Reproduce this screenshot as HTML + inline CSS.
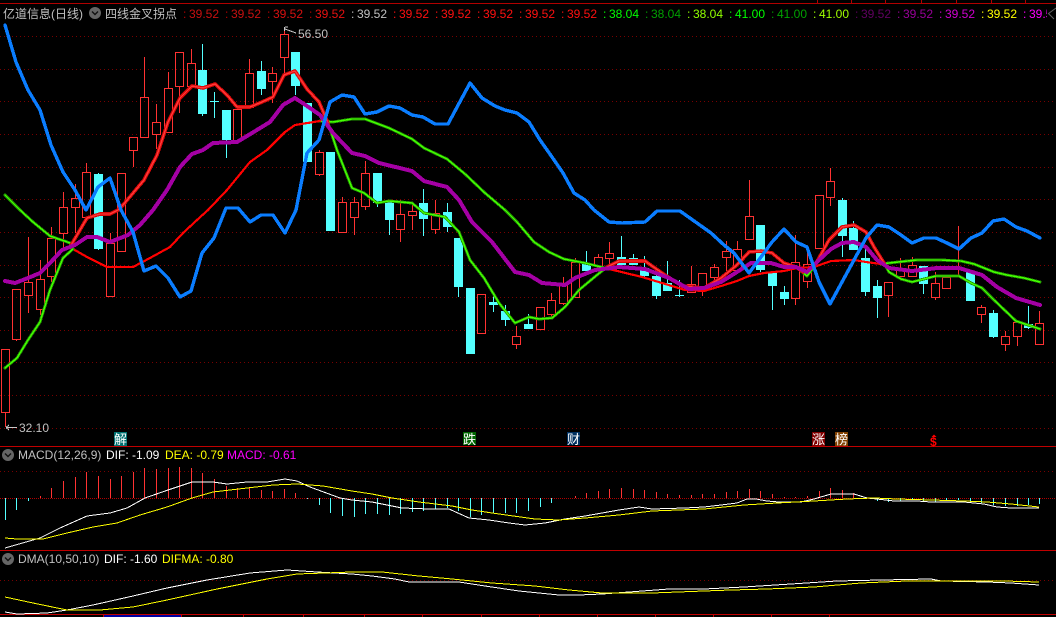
<!DOCTYPE html>
<html><head><meta charset="utf-8"><style>
html,body{margin:0;padding:0;background:#000;width:1056px;height:617px;overflow:hidden}
svg{display:block;position:absolute;left:0;top:0}
text{font-family:"Liberation Sans","Noto Sans CJK SC",sans-serif;font-size:12px}
</style></head><body>
<svg width="1056" height="617" viewBox="0 0 1056 617" xmlns="http://www.w3.org/2000/svg">
<rect width="1056" height="617" fill="#000"/>
<defs>
<clipPath id="hc"><rect x="0" y="0" width="1047" height="30"/></clipPath>
<path id="g1" d="M5 368L17 358L28 340L40 322L50 290L63 258L73 249"/>
<path id="r1" d="M70 247L87 218L100 214L110 214L118 210L123 205L144 180L157 155L168 122L180 98L192 86L203 88L215 84L227 95L237 107L250 107L262 102L273 97L284 75L295 71L307 89L319 102L328 123"/>
<path id="g2" d="M328 123L337 150L352 188L364 193L377 203L389 201L412 203L424 213L445 217L459 232L470 260L484 278L499 303L515 323L529 317L539 319L552 318L565 307L579 290L597 275L607 267"/>
<path id="r2" d="M607 267L619 261L645 261L662 273L682 286L704 288L721 278L737 265L749 252L761 251L772 253L784 263L796 267L803 272"/>
<path id="g3" d="M796 267L807 276L814 267L820 258"/>
<path id="r3" d="M814 267L829 240L842 227L854 225L866 232L874 247L884 263"/>
<path id="g4" d="M884 263L889 272L901 279L912 282L924 279L936 276L959 276L971 283L982 288L994 300L1016 321L1040 329"/>
<path id="g5" d="M5 195L20 210L33 222L50 236L73 244"/>
<path id="g6" d="M320 121L333 122L352 119L365 119L389 128L412 139L424 148L447 159L465 174L485 193L505 210L517 222L534 242L549 252L564 259L585 263L609 269"/>
<path id="g7" d="M881 264L889 263L917 260L941 260L961 261L974 264L994 272L1007 275L1024 278L1040 282"/>
</defs>
<!-- top border and ticks -->
<g shape-rendering="crispEdges">
<rect x="0" y="3" width="1056" height="1" fill="#b00000"/>
<path d="M817.5 0V3M851.5 0V3M885.5 0V3M921.5 0V3M956.5 0V3M991.5 0V3M1025.5 0V3" stroke="#b00000" fill="none"/>
<!-- grid -->
<g stroke="#780000" stroke-dasharray="1 3" fill="none">
<path d="M0 36.5H1056M0 69.5H1056M0 101.5H1056M0 134.5H1056M0 167.5H1056M0 199.5H1056M0 232.5H1056M0 265.5H1056M0 297.5H1056M0 330.5H1056M0 362.5H1056M0 395.5H1056M0 428.5H1056M0 471.5H1056M0 580.5H1056"/>
</g>
<path d="M0 498.5H1056" stroke="#b00000" stroke-dasharray="1 1" fill="none"/>
<!-- panel lines -->
<rect x="0" y="446" width="1056" height="1" fill="#c00000"/>
<rect x="0" y="550" width="1056" height="1" fill="#c00000"/>
<rect x="0" y="614" width="1056" height="1" fill="#c00000"/>
<rect x="103" y="615" width="78" height="2" fill="#0000a0"/>
<path d="M103.5 615V617M181.5 615V617M243.5 615V617M303.5 615V617M364.5 615V617M422.5 615V617M481.5 615V617M539.5 615V617M597.5 615V617M655.5 615V617M713.5 615V617M771.5 615V617M829.5 615V617" stroke="#c00000" fill="none"/>
<!-- red wicks -->
<path fill="none" stroke="#ff3232" d="M5.5 412V427M16.5 339V341M28.5 237V282M28.5 295V313M40.5 260V279M40.5 309V315M51.5 227V238M51.5 276V282M63.5 192V207M63.5 233V248M75.5 184V198M75.5 207V233M86.5 163V172M110.5 233V243M133.5 150V167M144.5 57V97M156.5 104V122M156.5 134V149M168.5 72V88M179.5 86V113M191.5 49V63M249.5 59V73M272.5 67V73M272.5 81V103M284.5 28V34M284.5 57V73M319.5 150V152M319.5 174V176M342.5 197V202M354.5 197V202M354.5 217V235M365.5 161V173M365.5 206V210M400.5 200V214M400.5 229V242M412.5 205V211M412.5 215V230M435.5 200V213M435.5 229V234M516.5 326V336M516.5 344V349M551.5 293V300M551.5 314V317M563.5 277V285M563.5 303V305M575.5 258V262M598.5 254V257M609.5 242V253M609.5 258V265M691.5 266V284M702.5 290V296M714.5 264V267M714.5 277V280M726.5 241V251M726.5 257V271M737.5 241V249M749.5 180V216M795.5 235V262M795.5 298V305M807.5 253V264M807.5 281V288M830.5 168V181M830.5 197V206M888.5 295V317M900.5 258V268M912.5 257V265M935.5 272V283M935.5 297V300M958.5 226V277M981.5 305V307M981.5 314V323M1005.5 331V336M1005.5 344V351M1017.5 336V346M1039.5 311V323"/>
<!-- red bodies -->
<path fill="none" stroke="#ff3232" d="M1.5 349.5h8V412.5h-8zM12.5 289.5h8V339.5h-8zM24.5 282.5h8V295.5h-8zM36.5 279.5h8V309.5h-8zM47.5 238.5h8V276.5h-8zM59.5 207.5h8V233.5h-8zM71.5 198.5h8V207.5h-8zM82.5 172.5h8V217.5h-8zM106.5 243.5h8V296.5h-8zM117.5 173.5h8V251.5h-8zM129.5 137.5h8V150.5h-8zM140.5 97.5h8V137.5h-8zM152.5 122.5h8V134.5h-8zM164.5 88.5h8V132.5h-8zM175.5 52.5h8V86.5h-8zM187.5 63.5h8V86.5h-8zM233.5 109.5h8V140.5h-8zM245.5 73.5h8V107.5h-8zM268.5 73.5h8V81.5h-8zM280.5 34.5h8V57.5h-8zM315.5 152.5h8V174.5h-8zM338.5 202.5h8V232.5h-8zM350.5 202.5h8V217.5h-8zM361.5 173.5h8V206.5h-8zM396.5 214.5h8V229.5h-8zM408.5 211.5h8V215.5h-8zM431.5 213.5h8V229.5h-8zM477.5 294.5h8V333.5h-8zM512.5 336.5h8V344.5h-8zM536.5 307.5h8V329.5h-8zM547.5 300.5h8V314.5h-8zM559.5 285.5h8V303.5h-8zM571.5 262.5h8V297.5h-8zM594.5 257.5h8V266.5h-8zM605.5 253.5h8V258.5h-8zM687.5 284.5h8V292.5h-8zM698.5 273.5h8V290.5h-8zM710.5 267.5h8V277.5h-8zM722.5 251.5h8V257.5h-8zM733.5 249.5h8V270.5h-8zM745.5 216.5h8V239.5h-8zM791.5 262.5h8V298.5h-8zM803.5 264.5h8V281.5h-8zM815.5 195.5h8V248.5h-8zM826.5 181.5h8V197.5h-8zM884.5 282.5h8V295.5h-8zM896.5 268.5h8V276.5h-8zM908.5 265.5h8V276.5h-8zM931.5 283.5h8V297.5h-8zM942.5 277.5h8V288.5h-8zM977.5 307.5h8V314.5h-8zM1001.5 336.5h8V344.5h-8zM1013.5 322.5h8V336.5h-8zM1035.5 323.5h8V344.5h-8z"/>
<!-- cyan wicks -->
<path fill="none" stroke="#54ffff" d="M98.5 173V250M202.5 44V116M214.5 92V118M226.5 140V158M261.5 61V95M295.5 86V95M377.5 203V207M389.5 220V235M423.5 189V236M447.5 203V232M458.5 287V297M493.5 293V312M505.5 305V326M528.5 314V324M586.5 251V264M621.5 236V257M633.5 254V258M644.5 256V278M656.5 271V299M667.5 261V283M679.5 280V297M760.5 270V272M772.5 286V310M784.5 286V305M842.5 198V257M853.5 221V228M865.5 249V296M877.5 280V318M923.5 284V294M993.5 310V338M1028.5 306V329M210 101.5H219M675 295.5H684"/>
<!-- cyan bodies -->
<path fill="#54ffff" d="M94 174h9V249h-9zM198 70h9V114h-9zM222 110h9V140h-9zM257 71h9V89h-9zM291 52h9V86h-9zM303 103h9V162h-9zM326 152h9V231h-9zM373 173h9V203h-9zM385 202h9V220h-9zM419 203h9V219h-9zM443 212h9V227h-9zM454 238h9V287h-9zM466 288h9V354h-9zM489 302h9V305h-9zM501 311h9V320h-9zM524 324h9V329h-9zM582 264h9V271h-9zM617 257h9V265h-9zM629 258h9V265h-9zM640 268h9V276h-9zM652 276h9V296h-9zM663 283h9V291h-9zM756 225h9V270h-9zM768 273h9V286h-9zM780 292h9V299h-9zM838 200h9V236h-9zM849 228h9V250h-9zM861 258h9V292h-9zM873 286h9V298h-9zM919 266h9V284h-9zM966 271h9V301h-9zM989 313h9V337h-9zM1024 324h9V328h-9z"/>
</g>
<!-- main lines -->
<g fill="none" shape-rendering="crispEdges" stroke-linejoin="round" stroke-linecap="round">
<!-- slow line -->
<g stroke="#1f8f00" stroke-width="3"><use href="#g5"/><use href="#g6"/><use href="#g7"/></g>
<g stroke="#44ff00" stroke-width="1.4"><use href="#g5"/><use href="#g6"/><use href="#g7"/></g>
<path stroke="#ff0000" stroke-width="2.2" d="M73 249L87 257L107 267L133 267L150 258L170 247L183 233L197 220L208 210L227 190L250 162L267 150L285 132L295 125L320 121M609 269L642 277L662 283L685 290L704 291L721 286L737 281L749 276L764 273L784 271L797 268L814 267L831 261L854 260L866 262L881 264"/>
<!-- fast line -->
<g stroke="#1f8f00" stroke-width="3"><use href="#g1"/><use href="#g2"/><use href="#g3"/><use href="#g4"/></g>
<g stroke="#44ff00" stroke-width="1.4"><use href="#g1"/><use href="#g2"/><use href="#g3"/><use href="#g4"/></g>
<g stroke="#d80808" stroke-width="3.6"><use href="#r1"/><use href="#r2"/><use href="#r3"/></g>
<g stroke="#ff3838" stroke-width="1.4"><use href="#r1"/><use href="#r2"/><use href="#r3"/></g>
<!-- purple -->
<path stroke="#a400a4" stroke-width="4" d="M5 281L15 283L28 278L40 273L50 263L62 250L75 245L87 237L97 237L110 242L128 235L140 225L153 210L167 190L180 167L192 154L203 150L213 143L237 142L252 133L270 122L283 105L295 98L307 106L320 115L333 133L352 153L365 156L379 163L412 171L424 181L447 187L459 200L472 222L492 242L515 272L529 275L542 283L565 285L575 278L595 270L619 267L645 269L669 278L689 289L704 288L721 282L737 272L751 263L771 263L784 267L796 267L807 272L819 260L831 249L842 243L854 242L866 247L877 260L889 268L912 271L937 268L959 268L982 275L997 287L1016 298L1040 305"/>
<!-- blue -->
<path stroke="#0a7dff" stroke-width="3.4" d="M5 25L16 62L28 90L40 110L51 145L63 172L75 190L86 210L98 187L110 178L121 210L133 232L144 271L156 266L168 278L180 297L191 291L202 253L214 238L226 208L238 208L250 222L261 215L273 215L285 233L296 210L307 153L319 140L330 102L342 95L354 97L365 114L377 112L389 106L400 108L412 115L423 117L435 124L448 124L470 83L482 98L495 106L505 110L517 113L529 122L540 140L552 157L563 173L574 193L585 200L594 210L609 222L622 223L645 222L657 211L680 211L704 228L711 233L724 245L734 253L749 273L761 257L772 242L784 229L796 242L807 247L819 282L830 304L842 282L854 260L866 238L877 225L889 227L901 235L912 243L924 238L936 238L947 243L959 249L971 238L982 233L993 221L1004 219L1016 227L1027 231L1040 238"/>
</g>
<!-- histogram -->
<g shape-rendering="crispEdges" fill="none">
<path stroke="#54ffff" d="M5.5 498V520M16.5 498V510M28.5 498V501M307.5 498V499M319.5 498V505M330.5 498V513M342.5 498V516M354.5 498V517M365.5 498V514M377.5 498V514M389.5 498V515M400.5 498V514M412.5 498V512M423.5 498V511M435.5 498V509M447.5 498V508M458.5 498V511M470.5 498V517M481.5 498V515M493.5 498V513M505.5 498V513M516.5 498V513M528.5 498V511M540.5 498V507M551.5 498V503M877.5 498V501M888.5 498V502M900.5 498V501M912.5 498V500M923.5 498V501M935.5 498V502M946.5 498V501M958.5 498V500M970.5 498V502M981.5 498V503M993.5 498V505M1005.5 498V506M1017.5 498V506M1028.5 498V505M1039.5 498V504"/>
<path stroke="#ff3232" d="M40.5 496V498M51.5 488V498M63.5 481V498M75.5 477V498M86.5 472V498M98.5 476V498M110.5 479V498M121.5 476V498M133.5 472V498M144.5 468V498M156.5 469V498M168.5 468V498M179.5 467V498M191.5 468V498M202.5 473V498M214.5 479V498M226.5 486V498M237.5 488V498M249.5 488V498M261.5 490V498M272.5 491V498M284.5 489V498M295.5 493V498M575.5 496V498M586.5 493V498M598.5 491V498M609.5 489V498M621.5 488V498M633.5 489V498M644.5 490V498M656.5 492V498M667.5 494V498M679.5 495V498M691.5 495V498M702.5 494V498M714.5 494V498M726.5 492V498M737.5 491V498M749.5 489V498M760.5 491V498M772.5 494V498M784.5 497V498M795.5 497V498M807.5 496V498M819.5 491V498M830.5 488V498M842.5 490V498M853.5 493V498"/>
<path stroke="#ffffff" stroke-width="1" d="M5 548L40 538L60 528L87 516L110 513L127 508L145 498L168 490L192 482L213 482L227 484L247 482L267 482L285 479L297 481L310 487L340 498L352 500L372 502L392 506L402 508L429 509L449 509L469 518L489 520L509 523L525 525L545 523L565 519L585 516L619 510L639 507L652 509L685 508L704 507L721 505L737 503L747 499L756 499L767 501L779 502L801 502L814 499L831 494L854 494L867 498L877 499L894 501L917 501L931 502L964 502L984 504L997 507L1011 508L1039 508"/>
<path stroke="#ffff00" stroke-width="1" d="M5 538L17 539L43 539L67 533L93 527L117 523L140 515L167 507L192 498L213 492L247 488L273 485L297 484L323 486L352 491L372 494L392 498L419 502L452 506L472 510L499 514L535 519L559 520L585 518L619 515L652 511L704 509L744 505L777 503L814 501L847 499L874 498L897 499L931 500L964 501L987 502L1011 504L1039 507"/>
<path stroke="#ffffff" stroke-width="1" d="M5 612L17 614L47 613L67 610L93 605L133 596L167 588L207 580L250 573L287 570L317 572L352 574L372 576L395 579L409 582L459 582L485 586L519 591L559 595L579 595L602 594L629 592L669 589L704 589L744 587L791 584L837 581L881 580L931 579L941 581L987 582L1011 583L1039 585"/>
<path stroke="#ffff00" stroke-width="1" d="M5 597L33 603L67 610L100 610L133 607L167 600L217 589L267 579L297 574L352 572L382 572L419 576L452 579L492 583L535 586L569 590L602 593L652 593L704 591L731 590L767 589L814 587L861 583L907 581L1004 581L1039 582"/>
</g>
<!-- high / low labels -->
<g fill="none" stroke="#c8c8c8">
<path shape-rendering="crispEdges" d="M284.5 27V31M285 27H288M285 29L296 33"/>
<path shape-rendering="crispEdges" d="M6 427.5H17M6 427.5L9 425M6 427.5L9 430"/>
</g>
<text x="298" y="38" fill="#c0c0c0">56.50</text>
<text x="19" y="432" fill="#c0c0c0">32.10</text>
<!-- news markers -->
<g shape-rendering="crispEdges">
<rect x="114" y="432" width="13" height="14" fill="#007070"/>
<rect x="463" y="432" width="13" height="13" fill="#006400"/>
<rect x="567" y="432" width="13" height="13" fill="#003060"/>
<rect x="812" y="432" width="13" height="14" fill="#800000"/>
<rect x="835" y="432" width="13" height="14" fill="#804000"/>
</g>
<g fill="#ffffff">
<text x="114" y="444" style="font-size:13px">解</text>
<text x="463" y="444" style="font-size:13px">跌</text>
<text x="567" y="444" style="font-size:13px">财</text>
<text x="812" y="444" style="font-size:13px">涨</text>
<text x="835" y="444" style="font-size:13px">榜</text>
</g>
<path d="M934 434.5L936.5 437H931.5Z" fill="#ff0000"/>
<text x="930" y="446" fill="#ff0000" style="font-size:12px;font-weight:bold">$</text>
<!-- header -->
<text x="3" y="18" fill="#c0c0c0">亿道信息(日线)</text>
<circle cx="95" cy="13" r="6" fill="#666"/>
<path d="M92 11.5L95 14.5L98 11.5" fill="none" stroke="#111" stroke-width="1.4"/>
<text x="105" y="18" fill="#c0c0c0">四线金叉拐点</text>
<g clip-path="url(#hc)">
<text x="183" y="18" fill="#b80000">:</text><text x="189" y="18" fill="#c81010">39.52</text>
<text x="225" y="18" fill="#b80000">:</text><text x="231" y="18" fill="#c81010">39.52</text>
<text x="267" y="18" fill="#b80000">:</text><text x="273" y="18" fill="#d81010">39.52</text>
<text x="309" y="18" fill="#b80000">:</text><text x="315" y="18" fill="#e81010">39.52</text>
<text x="351" y="18" fill="#c0c0c0">:</text><text x="357" y="18" fill="#c0c0c0">39.52</text>
<text x="393" y="18" fill="#ff1010">:</text><text x="399" y="18" fill="#ff1010">39.52</text>
<text x="435" y="18" fill="#ff1010">:</text><text x="441" y="18" fill="#ff1010">39.52</text>
<text x="477" y="18" fill="#ff1010">:</text><text x="483" y="18" fill="#ff1010">39.52</text>
<text x="519" y="18" fill="#ff1010">:</text><text x="525" y="18" fill="#ff1010">39.52</text>
<text x="561" y="18" fill="#ff1010">:</text><text x="567" y="18" fill="#ff1010">39.52</text>
<text x="603" y="18" fill="#00ff00">:</text><text x="609" y="18" fill="#00ff00">38.04</text>
<text x="645" y="18" fill="#00a000">:</text><text x="651" y="18" fill="#00a000">38.04</text>
<text x="687" y="18" fill="#90ff00">:</text><text x="693" y="18" fill="#90ff00">38.04</text>
<text x="729" y="18" fill="#00ff00">:</text><text x="735" y="18" fill="#00ff00">41.00</text>
<text x="771" y="18" fill="#00a000">:</text><text x="777" y="18" fill="#00a000">41.00</text>
<text x="813" y="18" fill="#a0ff00">:</text><text x="819" y="18" fill="#a0ff00">41.00</text>
<text x="855" y="18" fill="#600060">:</text><text x="861" y="18" fill="#600060">39.52</text>
<text x="897" y="18" fill="#980098">:</text><text x="903" y="18" fill="#980098">39.52</text>
<text x="939" y="18" fill="#d000d0">:</text><text x="945" y="18" fill="#d000d0">39.52</text>
<text x="981" y="18" fill="#ffff00">:</text><text x="987" y="18" fill="#ffff00">39.52</text>
<text x="1023" y="18" fill="#ff00ff">:</text><text x="1029" y="18" fill="#ff00ff">39.52</text>
</g>
<path d="M1056 8L1048.5 13.5L1054 19" fill="none" stroke="#606060"/>
<!-- MACD header -->
<circle cx="8" cy="455" r="6" fill="#666"/>
<path d="M5 453.5L8 456.5L11 453.5" fill="none" stroke="#111" stroke-width="1.4"/>
<text x="18" y="459" fill="#c0c0c0">MACD(12,26,9)</text>
<text x="106" y="459" fill="#ffffff">DIF: -1.09</text>
<text x="165" y="459" fill="#ffff00">DEA: -0.79</text>
<text x="227" y="459" fill="#ff00ff">MACD: -0.61</text>
<!-- DMA header -->
<circle cx="8" cy="559" r="6" fill="#666"/>
<path d="M5 557.5L8 560.5L11 557.5" fill="none" stroke="#111" stroke-width="1.4"/>
<text x="18" y="563" fill="#c0c0c0">DMA(10,50,10)</text>
<text x="104" y="563" fill="#ffffff">DIF: -1.60</text>
<text x="162" y="563" fill="#ffff00">DIFMA: -0.80</text>
</svg>
</body></html>
